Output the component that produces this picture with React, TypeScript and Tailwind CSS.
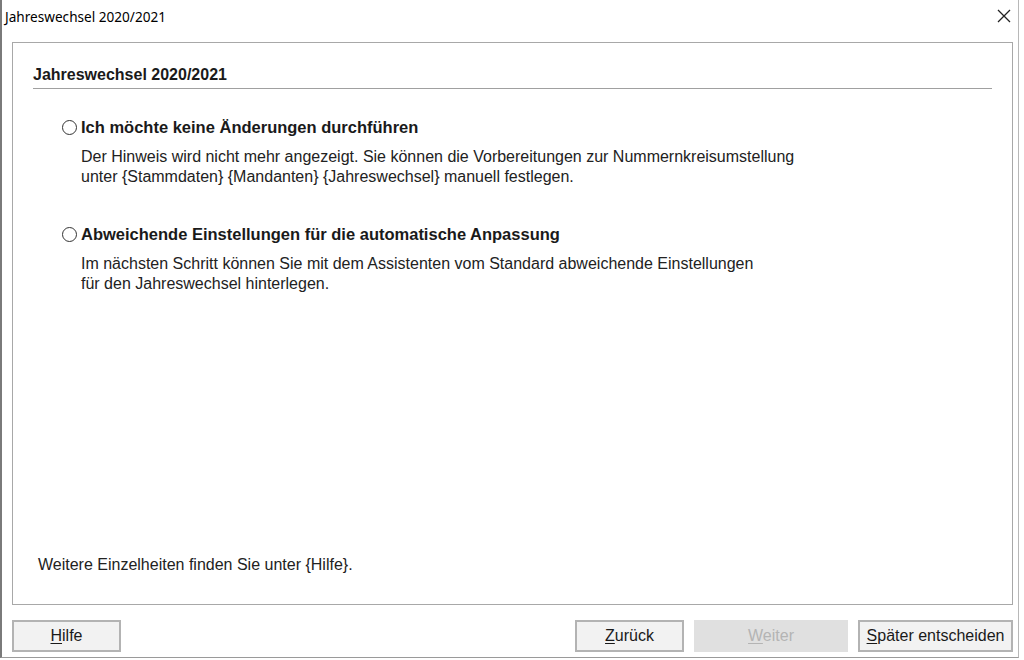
import React from 'react';

const Radio: React.FC = () => (
  <span className="inline-block w-[15px] h-[15px] rounded-full border border-[#333] bg-white shrink-0" />
);

interface OptionProps {
  label: string;
  lines: string[];
}

const Option: React.FC<OptionProps> = ({ label, lines }) => (
  <div className="flex flex-col">
    <div className="flex items-center gap-[4px] ml-[29px] h-[20px]">
      <Radio />
      <span className="text-[16.5px] font-bold text-[#1a1a1a]">{label}</span>
    </div>
    <div className="ml-[48px] mt-[10px] text-[16px] leading-[20px] text-[#222]">
      {lines.map((l) => (
        <div key={l}>{l}</div>
      ))}
    </div>
  </div>
);

interface BtnProps {
  hot: string;
  rest: string;
  width: string;
  disabled?: boolean;
}

const Btn: React.FC<BtnProps> = ({ hot, rest, width, disabled }) => (
  <button
    className={
      disabled
        ? `${width} h-[32px] bg-[#e0e0e0] text-[#b4b4b4] text-[16px]`
        : `${width} h-[32px] bg-[#f2f2f2] border-2 border-[#b3b3b3] text-[#1a1a1a] text-[16px]`
    }
  >
    <span className="underline underline-offset-2">{hot}</span>
    {rest}
  </button>
);

export default function App() {
  return (
    <div className="w-[1024px] h-[660px] bg-white font-['Liberation_Sans',Arial,sans-serif] overflow-hidden">
      <div className="w-[1019px] h-[658px] flex flex-col border-l-2 border-l-[#7a7a7a] border-r border-r-[#b8b8b8] border-b border-b-[#9a9a9a]">
        {/* Title bar */}
        <div className="h-[34px] flex items-center justify-between pl-[3px] pr-[6px]">
          <span className="font-['Noto_Sans',sans-serif] text-[13.6px] text-black">Jahreswechsel 2020/2021</span>
          <svg width="14" height="14" viewBox="0 0 14 14" className="mr-[1px] mb-[2px]">
            <path d="M1 1 L13 13 M13 1 L1 13" stroke="#222" strokeWidth="1.3" />
          </svg>
        </div>

        {/* Content panel */}
        <div className="ml-[10px] mt-[8px] w-[1001px] h-[563px] border border-[#a8a8a8] flex flex-col px-[20px] pt-[23px]">
          <div className="text-[16px] font-bold text-[#1a1a1a] leading-[18px]">Jahreswechsel 2020/2021</div>
          <div className="mt-[4px] h-px bg-[#a0a0a0]" />

          <div className="mt-[28px]">
            <Option
              label="Ich möchte keine Änderungen durchführen"
              lines={[
                'Der Hinweis wird nicht mehr angezeigt. Sie können die Vorbereitungen zur Nummernkreisumstellung',
                'unter {Stammdaten} {Mandanten} {Jahreswechsel} manuell festlegen.',
              ]}
            />
          </div>
          <div className="mt-[37px]">
            <Option
              label="Abweichende Einstellungen für die automatische Anpassung"
              lines={[
                'Im nächsten Schritt können Sie mit dem Assistenten vom Standard abweichende Einstellungen',
                'für den Jahreswechsel hinterlegen.',
              ]}
            />
          </div>

          <div className="flex-1" />
          <div className="ml-[5px] mb-[29px] text-[16px] leading-[20px] text-[#222]">
            Weitere Einzelheiten finden Sie unter {'{Hilfe}'}.
          </div>
        </div>

        {/* Buttons */}
        <div className="ml-[10px] mt-[15px] w-[1001px] flex items-center">
          <Btn hot="H" rest="ilfe" width="w-[109px]" />
          <div className="flex-1" />
          <div className="flex gap-[10px]">
            <Btn hot="Z" rest="urück" width="w-[109px]" />
            <Btn hot="W" rest="eiter" width="w-[154px]" disabled />
            <Btn hot="S" rest="päter entscheiden" width="w-[155px]" />
          </div>
        </div>
      </div>
    </div>
  );
}
